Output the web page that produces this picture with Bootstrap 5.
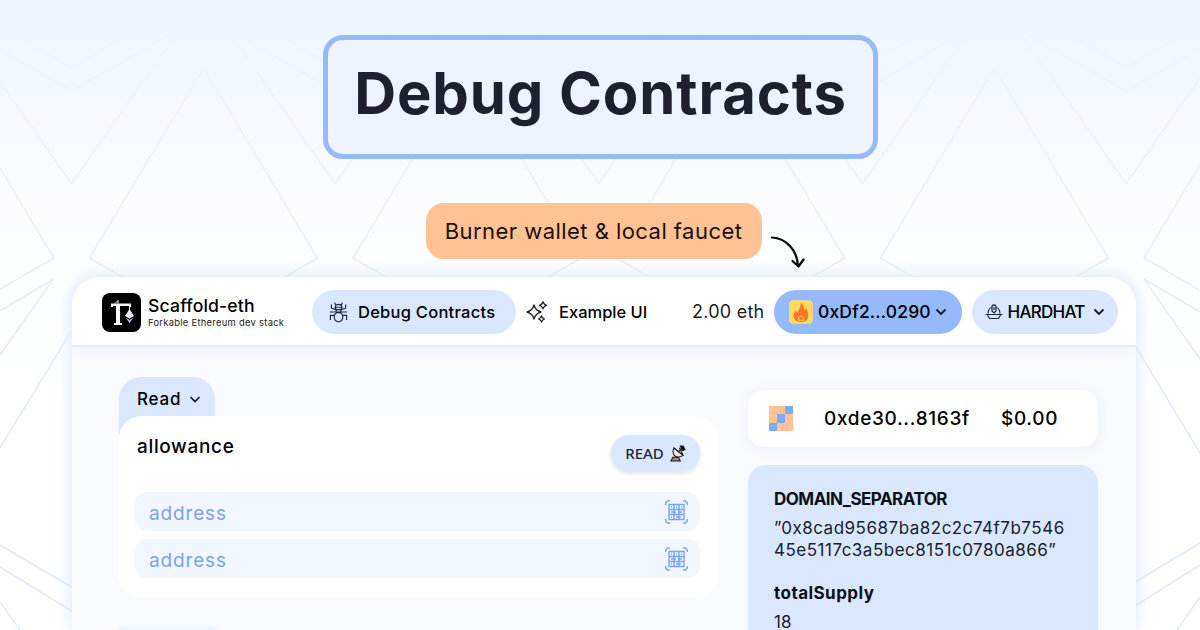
<!DOCTYPE html>
<html lang="en">
<head>
<meta charset="utf-8">
<meta name="viewport" content="width=device-width, initial-scale=1">
<title>Debug Contracts</title>
<link href="https://cdn.jsdelivr.net/npm/bootstrap@5.3.0/dist/css/bootstrap.min.css" rel="stylesheet">
<style>
  body { width:1200px; height:630px; font-family:Inter,"Liberation Sans",sans-serif; color:#000; line-height:1;
    background:linear-gradient(#eff4ff 0,#eff5ff 30px,#f7f9ff 130px,#fcfcff 200px,#fdfeff 290px,#fff 400px); }
  .backdrop { z-index:-1; }
  .hero-title { width:555px; height:124px; margin-top:35px; border:5px solid #96bbfd; border-radius:20px; background:#edf4ff;
    color:#1e202f; font-size:58px; font-weight:700; letter-spacing:.9px; padding:0 0 7px 1px; }
  .callout { width:336px; height:56px; margin:44px 0 0 425.5px; border-radius:18px; background:#ffc295; font-size:22px; letter-spacing:.46px; color:#1c0f08; }
  .callout-arrow { margin:77px 0 0 8.500px; }
  .app-window { width:1064px; height:353px; margin:18px 0 0 72px; border-radius:28px 28px 0 0; background:#fafbff;
    box-shadow:0 0 18px #cfe0fecc; }
  .app-header { height:70px; padding:2px 0 0 30px; background:#fff; border-bottom:2px solid #e3edfe; box-shadow:0 3px 12px #eaf1ff; border-radius:28px 28px 0 0; }
  .brand-text { width:162px; margin-left:7px; }
  .brand-name { font-size:17.6px; font-weight:500; letter-spacing:.16px; }
  .brand-sub { font-size:9.4px; color:#222; margin-top:4px; letter-spacing:.28px; }
  .pill { height:44px; border-radius:22px; background:#dae8ff; }
  .nav-text { font-size:16.5px; font-weight:500; }
  .read-tab { width:96px; height:75px; border-radius:22px 22px 0 0; background:#dae8ff; padding:14px 0 0 18px; font-size:17px; font-weight:500; letter-spacing:.8px; }
  .method-panel { width:599px; height:182px; margin-top:-36px; border-radius:22px; background:#fff; padding:19px 18px 0 16px; }
  .method-name { font-size:19px; font-weight:500; letter-spacing:.65px; padding:2px 0 0 2px; }
  .read-btn { width:89px; height:36px; border-radius:18px; background:#dae8ff; box-shadow:0 2px 5px #0002; font:500 15px/1 "Noto Sans",sans-serif; color:#202838; }
  .addr { height:39px; border-radius:12px; background:#f2f7ff; color:#76a3f3; font-size:19px; letter-spacing:.85px; padding:0 12px 0 14px; }
  .summary { height:57px; border-radius:16px; background:#fff; box-shadow:0 2px 14px #e9f0ff; font-size:19px; font-weight:500; letter-spacing:.65px; padding-left:21px; }
  .values { height:165px; margin-top:18px; border-radius:18px 18px 0 0; background:#dae8ff; padding:26px 0 0 26px; font-size:17px; color:#18202f; }
  .value-name { font-weight:700; color:#0b1017; }
  .value-hash { line-height:22px; margin-top:9px; letter-spacing:.5px; }
  .next-tab { width:96px; height:4px; margin-top:29px; background:#f0f5ff; box-shadow:0 0 5px #e6efff; }
</style>
</head>
<body class="overflow-hidden position-relative">
<svg class="backdrop position-absolute top-0 start-0" width="1200" height="630" fill="none" stroke="url(#fade)" stroke-width="1.1">
  <defs>
    <linearGradient id="fade" gradientUnits="userSpaceOnUse" x1="0" y1="15" x2="0" y2="350">
      <stop offset="0" stop-color="#e2edff" stop-opacity="0"/><stop offset=".3" stop-color="#e2edff" stop-opacity=".6"/><stop offset="1" stop-color="#d3e3ff"/>
    </linearGradient>
    <g id="motif">
      <path d="M-60.500-9 71.500 67.500 203.500-9M-60.500 15 71.500 91 203.500 15M-60.500-5 71.500 183.500 203.500-5M203.500 68 89.500 258l114 66 114-66z"/>
    </g>
  </defs>
  <use href="#motif" x="-263.600"/><use href="#motif"/><use href="#motif" x="263.600"/><use href="#motif" x="527.200"/><use href="#motif" x="790.900"/><use href="#motif" x="1054.500"/>
  <path d="M0 311 53.500 279 0 355M0 448 80 317M0 545 80 592M0 567 80 616M0 602 20 630M1200 312 1144 279 1200 359M1130 337 1200 453M1130 585 1200 543M1130 609 1200 565M1177 630 1200 597"/>
</svg>

<h1 class="hero-title d-flex align-items-center justify-content-center mx-auto mb-0 text-nowrap">Debug Contracts</h1>

<div class="d-flex" style="height:100px">
  <div class="callout d-flex align-items-center justify-content-center text-nowrap">Burner wallet &amp; local faucet</div>
  <svg class="callout-arrow" width="36" height="34" viewBox="770 236 36 34" fill="none" stroke="#080808" stroke-width="2.200" stroke-linecap="round" stroke-linejoin="round"><path d="M772 237.500c14 1 25 12 26 28M792.500 261l6 5.500 5-7"/></svg>
</div>

<main class="app-window">
  <header class="app-header d-flex align-items-center text-nowrap">
    <svg width="39" height="39" viewBox="0 0 39 39"><rect width="39" height="39" rx="8" fill="#000"/><path d="M9 10.500h20v3.500h-2v-1H18v17h2v2h-8v-2h2v-17h-3v1H9z" fill="#f7f7f7"/><path d="M13 10.500l3-3v3" fill="none" stroke="#fff"/><path d="M27.500 14v3" stroke="#fff"/><path d="M27.500 16 32 23l-4.500 2.500L23 23z" fill="#e9edff"/><path d="M23.500 24.500l4 2.500 4-2.500-4 5.500z" fill="#aec0f3"/></svg>
    <div class="brand-text">
      <div class="brand-name">Scaffold-eth</div>
      <div class="brand-sub">Forkable Ethereum dev stack</div>
    </div>
    <div class="pill nav-text d-flex align-items-center" style="width:204px;margin-left:2px;padding-left:17px">
      <svg width="19" height="22" viewBox="0 0 20 22" fill="none" stroke="#17243a" stroke-width="1.200"><path d="M6.500 6c0-4 7-4 7 0M6 1c0 2 1 2.500 2 3M14 1c0 2-1 2.500-2 3M6.500 6h7l-1 2.500h-5zM7.500 8.500h5V11h-5zM10 11.500c-6 .5-6 9 0 10 6-1 6-9.500 0-10zM7 8.500 2.500 7V3M13 8.500l4.500-1.500V3M7.500 11H1M12.500 11H19M5.500 14.500l-4 0 0 5M14.500 14.500l4 0 0 5"/></svg>
      <span style="margin-left:10px;letter-spacing:.25px">Debug Contracts</span>
    </div>
    <svg style="margin-left:10px" width="22" height="22" viewBox="0 0 22 22" fill="none" stroke="#222" stroke-width="1.300" stroke-linejoin="round"><path d="M8 4q1.500 5.500 7 7-5.500 1.500-7 7-1.500-5.500-7-7 5.500-1.500 7-7zM17 .800q.8 2.700 3.500 3.500Q17.800 5 17 7.800q-.8-2.800-3.500-3.500Q16.200 3.500 17 .8zM15.500 15q.6 2.300 3 3-2.400.7-3 3-.6-2.300-3-3 2.400-.7 3-3z"/></svg>
    <span class="nav-text" style="width:133px;margin-left:11px">Example UI</span>
    <span style="width:82px;font-size:18px;letter-spacing:.25px;color:#1c1c1c">2.00 eth</span>
    <div class="pill d-flex align-items-center" style="width:188px;padding-left:15px;background:#94b9fc">
      <svg width="24" height="24" viewBox="0 0 24 24"><rect x=".5" y=".5" width="23" height="23" rx="4" fill="#ffda60" stroke="#f5d48a"/><path d="M12 3c4 3 2 6 4 7l1-2c4 6 3 14-5 14S3 15 7 10l1 3c3-4 3-6 4-10z" fill="#ff7629"/><path d="M9 21c-2-7 8-7 6 0z" fill="#ffb84a"/><circle cx="12" cy="18.500" r="1.700" fill="#ff7629"/></svg>
      <span style="width:113px;margin-left:5px;font-size:17.500px;font-weight:500;letter-spacing:.15px">0xDf2...0290</span>
      <svg style="margin-left:4px" width="12" height="8" viewBox="0 0 12 8" fill="none" stroke="#111827" stroke-width="1.800"><path d="M1.500 1.500 6 6l4.500-4.500"/></svg>
    </div>
    <div class="pill d-flex align-items-center" style="width:146px;margin-left:9.500px;padding-left:13px">
      <svg width="18" height="16" viewBox="0 0 17 16" fill="none" stroke="#1d2a40" stroke-width="1.200"><path d="M2.500 9.500C3 5 5 3.500 6.500 3.500M10.500 3.500C12 3.500 14 5 14.500 9.500M0 10.500h17M2 11l2 3.500h9l2-3.500M6.500 7V2Q8.500 0 10.500 2v5L8.500 9zM8.500 3v3"/></svg>
      <span style="width:78px;margin-left:5px;font-size:17px;font-weight:500;letter-spacing:-.75px">HARDHAT</span>
      <svg style="margin-left:7px" width="12" height="8" viewBox="0 0 12 8" fill="none" stroke="#111827" stroke-width="1.800"><path d="M1.500 1.500 6 6l4.500-4.500"/></svg>
    </div>
  </header>

  <div class="d-flex" style="padding:30px 38px 0 47px;gap:30px">
    <section>
      <div class="read-tab">Read<svg class="ms-2" width="12" height="10" viewBox="0 -2 12 10" fill="none" stroke="#111827" stroke-width="1.700"><path d="M1.500 0 6 4.500 10.500 0"/></svg></div>
      <div class="method-panel position-relative">
        <div class="d-flex justify-content-between" style="height:57px">
          <div class="method-name">allowance</div>
          <div class="read-btn d-flex align-items-center justify-content-center">READ
            <svg style="margin-left:6px" width="16" height="17" viewBox="0 0 17 18" fill="#eee5dc" stroke="#171717" stroke-width="1.100"><path d="M3 13h6l2 4H1z" fill="#aa8069"/><path d="M4 3c-3 9 4 12 10 8z"/><path d="M4 3l10 8-4-8M9 7l4-4" fill="none"/><path d="M11 1h3l2 4-3 1z" fill="#171717"/></svg>
          </div>
        </div>
        <div class="addr d-flex align-items-center justify-content-between"><span class="pt-1">address</span><svg width="23" height="24" viewBox="0 0 23 24" fill="none" stroke="#76a3f3" stroke-width="1.400"><path d="M.7 5V3L2.500 1H5M18 1h2.500l1.800 2v2M22.300 19v2l-1.800 2H18M5 23H2.500L.7 21v-2M4 4.500h15v15H4zM4 9.500h15M4 14.500h15M9 4.500v15M14 4.500v15M6 7h1M11 7h1M16 7h1M6 12h5M13 12h4M6 17h1M11 17h5"/></svg></div>
        <div class="addr d-flex align-items-center justify-content-between" style="margin-top:8px"><span class="pt-1">address</span><svg width="23" height="24" viewBox="0 0 23 24" fill="none" stroke="#76a3f3" stroke-width="1.400"><path d="M.7 5V3L2.500 1H5M18 1h2.500l1.800 2v2M22.300 19v2l-1.800 2H18M5 23H2.500L.7 21v-2M4 4.500h15v15H4zM4 9.500h15M4 14.500h15M9 4.500v15M14 4.500v15M6 7h1M11 7h1M16 7h1M6 12h5M13 12h4M6 17h1M11 17h5"/></svg></div>
      </div>
      <div class="next-tab"></div>
    </section>
    <aside style="width:350px;padding-top:13px">
      <div class="summary d-flex align-items-center">
        <svg width="24" height="25" viewBox="0 0 3 3" preserveAspectRatio="none" shape-rendering="crispEdges"><path fill="#ffc295" d="M0 0h3v3H0z"/><path fill="#7dadfa" d="M2 0h1v1H2zM1 1h1v1H1zM0 2h1v1H0z"/></svg>
        <span style="width:177px;margin-left:31px">0xde30...8163f</span><span>$0.00</span>
      </div>
      <div class="values">
        <div class="value-name" style="letter-spacing:-.52px">DOMAIN_SEPARATOR</div>
        <div class="value-hash">”0x8cad95687ba82c2c74f7b7546<br>45e5117c3a5bec8151c0780a866”</div>
        <div class="value-name" style="margin-top:24px;letter-spacing:.45px">totalSupply</div>
        <div style="margin-top:12px">18</div>
      </div>
    </aside>
  </div>
</main>
<script src="https://cdn.jsdelivr.net/npm/bootstrap@5.3.0/dist/js/bootstrap.bundle.min.js"></script>
</body>
</html>
